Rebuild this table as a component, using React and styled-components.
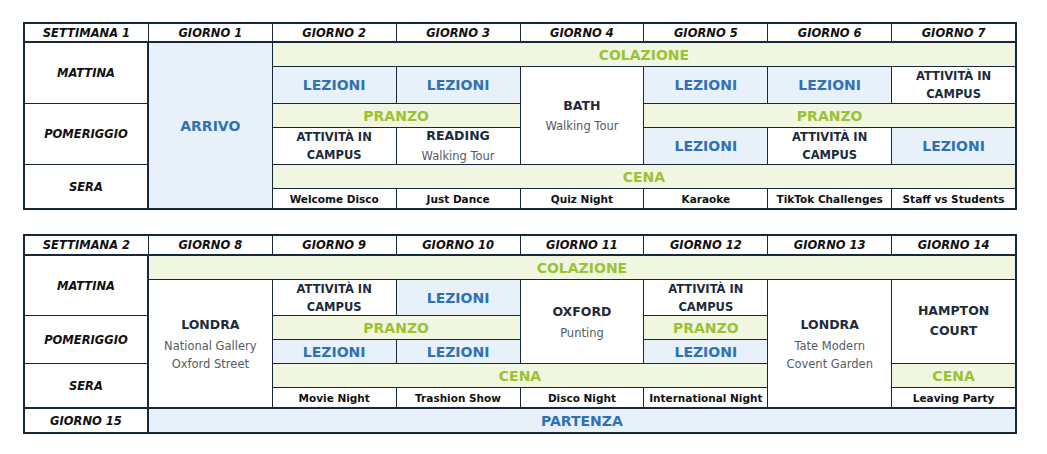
import styled, { createGlobalStyle, css } from "styled-components";

const NAVY = "#17283b";
const INK = "#1d2b3b";
const GREEN = "#9cc135";
const GREEN_BG = "#f0f6e0";
const BLUE = "#2f72b4";
const BLUE_BG = "#e8f0fa";

const GlobalStyle = createGlobalStyle`
  body {
    margin: 0;
    background: #fff;
    font-family: "DejaVu Sans", "Liberation Sans", sans-serif;
  }
`;

const Page = styled.div`
  padding: 22px 0 0 23px;
  display: flex;
  flex-direction: column;
  gap: 24px;
`;

const Schedule = styled.div`
  width: 994px;
  box-sizing: border-box;
  display: grid;
  grid-template-columns: repeat(8, 1fr);
  grid-template-rows: ${(p) => p.$rows};
  gap: 1px;
  border: 2px solid ${NAVY};
  background: ${NAVY};
`;

const place = css`
  grid-column: ${(p) => p.$c};
  grid-row: ${(p) => p.$r};
  box-sizing: border-box;
  display: flex;
  flex-direction: column;
  align-items: center;
  justify-content: center;
  text-align: center;
  background: #fff;
`;

const HeadCell = styled.div`
  ${place};
  border-bottom: 1px solid ${NAVY};
  font-size: 11.5px;
  font-weight: 700;
  font-style: italic;
  color: #111;
`;

const SlotLabel = styled.div`
  ${place};
  border-right: 1px solid ${NAVY};
  border-top: ${(p) => (p.$sep ? `1px solid ${NAVY}` : "0")};
  font-size: 11.5px;
  font-weight: 700;
  font-style: italic;
  color: #111;
`;

const Meal = styled.div`
  ${place};
  background: ${GREEN_BG};
  color: ${GREEN};
  font-size: 14px;
  font-weight: 700;
`;

const Lesson = styled.div`
  ${place};
  background: ${BLUE_BG};
  color: ${BLUE};
  font-size: 14px;
  font-weight: 700;
  border-top: ${(p) => (p.$sep ? `1px solid ${NAVY}` : "0")};
`;

const Activity = styled.div`
  ${place};
  color: ${INK};
  font-size: 11.5px;
  font-weight: 700;
  line-height: 18px;
`;

const Trip = styled.div`
  ${place};
  color: ${INK};
`;

const TripName = styled.div`
  font-size: 12.5px;
  font-weight: 700;
  line-height: ${(p) => (p.$tall ? "20px" : "18px")};
  margin-bottom: 2px;
`;

const TripSub = styled.div`
  font-size: 11.5px;
  color: #555b63;
  line-height: 18px;
`;

const EventCell = styled.div`
  ${place};
  color: #111;
  font-size: 10.5px;
  font-weight: 700;
  white-space: nowrap;
`;

const heads1 = ["SETTIMANA 1", "GIORNO 1", "GIORNO 2", "GIORNO 3", "GIORNO 4", "GIORNO 5", "GIORNO 6", "GIORNO 7"];
const heads2 = ["SETTIMANA 2", "GIORNO 8", "GIORNO 9", "GIORNO 10", "GIORNO 11", "GIORNO 12", "GIORNO 13", "GIORNO 14"];
const events1 = ["Welcome Disco", "Just Dance", "Quiz Night", "Karaoke", "TikTok Challenges", "Staff vs Students"];
const events2 = ["Movie Night", "Trashion Show", "Disco Night", "International Night"];

const Campus = ({ c, r }) => (
  <Activity $c={c} $r={r}>
    ATTIVITÀ IN
    <br />
    CAMPUS
  </Activity>
);

function WeekOne() {
  return (
    <Schedule $rows="18px 23px 36px 23px 36px 23px 19px">
      {heads1.map((h, i) => (
        <HeadCell key={h} $c={`${i + 1}`} $r="1">
          {h}
        </HeadCell>
      ))}
      <SlotLabel $c="1" $r="2 / span 2">MATTINA</SlotLabel>
      <SlotLabel $c="1" $r="4 / span 2">POMERIGGIO</SlotLabel>
      <SlotLabel $c="1" $r="6 / span 2">SERA</SlotLabel>

      <Lesson $c="2" $r="2 / span 6">ARRIVO</Lesson>
      <Meal $c="3 / span 6" $r="2">COLAZIONE</Meal>

      <Lesson $c="3" $r="3">LEZIONI</Lesson>
      <Lesson $c="4" $r="3">LEZIONI</Lesson>
      <Trip $c="5" $r="3 / span 3">
        <TripName>BATH</TripName>
        <TripSub>Walking Tour</TripSub>
      </Trip>
      <Lesson $c="6" $r="3">LEZIONI</Lesson>
      <Lesson $c="7" $r="3">LEZIONI</Lesson>
      <Campus c="8" r="3" />

      <Meal $c="3 / span 2" $r="4">PRANZO</Meal>
      <Meal $c="6 / span 3" $r="4">PRANZO</Meal>

      <Campus c="3" r="5" />
      <Trip $c="4" $r="5">
        <TripName>READING</TripName>
        <TripSub>Walking Tour</TripSub>
      </Trip>
      <Lesson $c="6" $r="5">LEZIONI</Lesson>
      <Campus c="7" r="5" />
      <Lesson $c="8" $r="5">LEZIONI</Lesson>

      <Meal $c="3 / span 6" $r="6">CENA</Meal>
      {events1.map((e, i) => (
        <EventCell key={e} $c={`${i + 3}`} $r="7">
          {e}
        </EventCell>
      ))}
    </Schedule>
  );
}

function WeekTwo() {
  return (
    <Schedule $rows="19px 23px 35px 23px 23px 23px 19px 24px">
      {heads2.map((h, i) => (
        <HeadCell key={h} $c={`${i + 1}`} $r="1">
          {h}
        </HeadCell>
      ))}
      <SlotLabel $c="1" $r="2 / span 2">MATTINA</SlotLabel>
      <SlotLabel $c="1" $r="4 / span 2">POMERIGGIO</SlotLabel>
      <SlotLabel $c="1" $r="6 / span 2">SERA</SlotLabel>
      <SlotLabel $c="1" $r="8" $sep>GIORNO 15</SlotLabel>

      <Meal $c="2 / span 7" $r="2">COLAZIONE</Meal>

      <Trip $c="2" $r="3 / span 5">
        <TripName $tall>LONDRA</TripName>
        <TripSub>National Gallery</TripSub>
        <TripSub>Oxford Street</TripSub>
      </Trip>
      <Campus c="3" r="3" />
      <Lesson $c="4" $r="3">LEZIONI</Lesson>
      <Trip $c="5" $r="3 / span 3">
        <TripName $tall>OXFORD</TripName>
        <TripSub>Punting</TripSub>
      </Trip>
      <Campus c="6" r="3" />
      <Trip $c="7" $r="3 / span 5">
        <TripName $tall>LONDRA</TripName>
        <TripSub>Tate Modern</TripSub>
        <TripSub>Covent Garden</TripSub>
      </Trip>
      <Trip $c="8" $r="3 / span 3">
        <TripName $tall>
          HAMPTON
          <br />
          COURT
        </TripName>
      </Trip>

      <Meal $c="3 / span 2" $r="4">PRANZO</Meal>
      <Meal $c="6" $r="4">PRANZO</Meal>

      <Lesson $c="3" $r="5">LEZIONI</Lesson>
      <Lesson $c="4" $r="5">LEZIONI</Lesson>
      <Lesson $c="6" $r="5">LEZIONI</Lesson>

      <Meal $c="3 / span 4" $r="6">CENA</Meal>
      <Meal $c="8" $r="6">CENA</Meal>

      {events2.map((e, i) => (
        <EventCell key={e} $c={`${i + 3}`} $r="7">
          {e}
        </EventCell>
      ))}
      <EventCell $c="8" $r="7">Leaving Party</EventCell>

      <Lesson $c="2 / span 7" $r="8" $sep>
        PARTENZA
      </Lesson>
    </Schedule>
  );
}

export default function App() {
  return (
    <>
      <GlobalStyle />
      <Page>
        <WeekOne />
        <WeekTwo />
      </Page>
    </>
  );
}
